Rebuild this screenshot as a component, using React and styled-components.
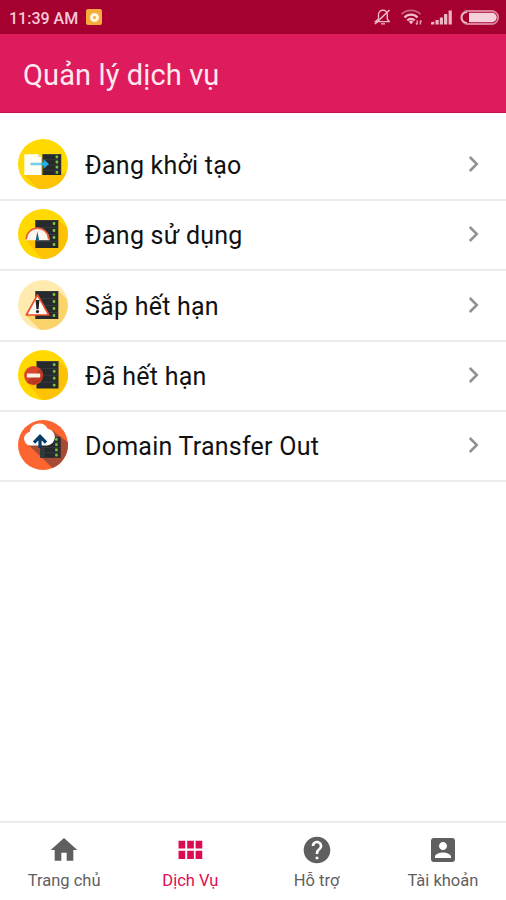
import styled, { createGlobalStyle } from 'styled-components'

const GlobalStyle = createGlobalStyle`
  * {
    box-sizing: border-box;
  }

  body {
    margin: 0;
    background-color: #fff;
    font-family: Roboto, sans-serif;
  }
`

const Server = ({ x = 17.3, y = 11, width = 23, height = 28 }) => {
  const step = height / 4;

  return (
    <g>
      <rect x={x} y={y} width={width} height={height} fill="#272a2c" />
      {[0, 1, 2, 3].map(it => (
        <g key={it}>
          <rect x={x} y={y + step * it} width={width} height="0.7" fill="#3b4144" />
          <rect x={x + width - 5.6} y={y + step * it + step / 2 - 1.4} width="2.6" height="2.8" rx="0.8" fill="#79c23c" />
        </g>
      ))}
    </g>
  )
}

const CreatingIcon = () => (
  <ServiceSvg viewBox="0 0 50 50">
    <circle cx="25" cy="25" r="25" fill="#ffd900" />
    <path d="M6.3 36 43.3 36 48.8 32.5A25 25 0 0 1 19.5 49.4Z" fill="#fdc204" />
    <path d="M6.3 15.2H20l3 2.8V36H6.3Z" fill="#fffdf4" />
    <path d="M20 15.2V18h3Z" fill="#dcdcc8" />
    <Server x={24.4} y={15.2} width={18.8} height={20.8} />
    <path d="M12.5 25H25" stroke="#73d0e8" strokeWidth="2.6" />
    <path d="M23.5 23.4h2v-3.2L31 25l-5.5 4.8v-3.2h-2Z" fill="#25afe0" />
  </ServiceSvg>
)

const UsingIcon = () => (
  <ServiceSvg viewBox="0 0 50 50">
    <circle cx="25" cy="25" r="25" fill="#ffd900" />
    <path d="M7.5 31 40.3 11 49 18.4A25 25 0 0 1 24 50Z" fill="#fdc204" />
    <Server />
    <path d="M7.5 31.2a12 12 0 0 1 24 0Z" fill="#fff8ee" />
    <path d="M8.2 30.5a11.3 11.3 0 0 1 22.6 0" fill="none" stroke="#e9603c" strokeWidth="1.7" />
    <path d="M11.5 30a8 8 0 0 1 16 0" fill="none" stroke="#dce5e8" strokeWidth="1" strokeDasharray="1.4 1.2" />
    <path d="m19.4 22.5 1.4 7a1.5 1.5 0 1 1-2.8 0Z" fill="#176285" />
  </ServiceSvg>
)

const ExpiringIcon = () => (
  <ServiceSvg viewBox="0 0 50 50">
    <circle cx="25" cy="25" r="25" fill="#ffebb0" />
    <path d="M7.8 35.5 40.3 11 49 19A25 25 0 0 1 22 49.8Z" fill="#fbd36b" />
    <Server />
    <path d="M19.5 14.8 30.8 35H8.3Z" fill="#fffaf3" stroke="#e94e2d" strokeWidth="1.7" strokeLinejoin="round" />
    <path d="M17.6 20h3.8l-.8 9.2h-2.2Z" fill="#222" />
    <circle cx="19.5" cy="31.6" r="1.6" fill="#222" />
  </ServiceSvg>
)

const ExpiredIcon = () => (
  <ServiceSvg viewBox="0 0 50 50">
    <circle cx="25" cy="25" r="25" fill="#ffd900" />
    <path d="M8.7 32.5 40.3 11 49 18.4A25 25 0 0 1 24 50Z" fill="#fdc204" />
    <Server x={18.5} y={11.2} width={22} height={27.3} />
    <circle cx="15.6" cy="25.5" r="9.5" fill="#d9472b" />
    <path d="M8.9 32.2A9.5 9.5 0 0 0 22.3 18.8Z" fill="#bd3924" />
    <rect x="8.9" y="23.6" width="13.3" height="3.8" rx="0.7" fill="#fff0e6" />
  </ServiceSvg>
)

const TransferIcon = () => (
  <ServiceSvg viewBox="0 0 50 50">
    <circle cx="25" cy="25" r="25" fill="#fc6530" />
    <path d="M9 23.5 35 10.5 42.5 17l7.2 5A25 25 0 0 1 34.5 48.1Z" fill="#a64b35" />
    <Server x={22.3} y={16.8} width={20.4} height={21} />
    <path d="M12.3 25.4a6.7 6.7 0 0 1-.6-13.3A9.6 9.6 0 0 1 29.7 8.7 8.4 8.4 0 0 1 29 25.4Z" fill="#fff" />
    <path d="M22.2 37.8h4.6V28.5h-4.6Z" fill="#303a3d" />
    <path d="M22 28V16.5M16 22.6l6-6.2 6 6.2" fill="none" stroke="#073b63" strokeWidth="3.2" />
  </ServiceSvg>
)

const services = [
  { label: 'Đang khởi tạo', icon: CreatingIcon },
  { label: 'Đang sử dụng', icon: UsingIcon },
  { label: 'Sắp hết hạn', icon: ExpiringIcon },
  { label: 'Đã hết hạn', icon: ExpiredIcon },
  { label: 'Domain Transfer Out', icon: TransferIcon },
]

const tabs = [
  { label: 'Trang chủ', path: 'M10 20v-6h4v6h5v-8h3L12 3 2 12h3v8z' },
  { label: 'Dịch Vụ', path: 'M3.4 10.8h5V5h-5v5.8zm0 7.9h5v-6.2h-5v6.2zm6.5 0h5v-6.2h-5v6.2zm6.3 0h5v-6.2h-5v6.2zM9.9 10.8h5V5h-5v5.8zM16.2 5v5.8h5V5h-5z', active: true },
  { label: 'Hỗ trợ', path: 'M12 2C6.48 2 2 6.48 2 12s4.48 10 10 10 10-4.48 10-10S17.52 2 12 2zm1 17h-2v-2h2v2zm2.07-7.75-.9.92C13.45 12.9 13 13.5 13 15h-2v-.5c0-1.1.45-2.1 1.17-2.83l1.24-1.26c.37-.36.59-.86.59-1.41 0-1.1-.9-2-2-2s-2 .9-2 2H8c0-2.21 1.79-4 4-4s4 1.79 4 4c0 .88-.36 1.68-.93 2.25z' },
  { label: 'Tài khoản', path: 'M3 5v14c0 1.1.89 2 2 2h14c1.1 0 2-.9 2-2V5c0-1.1-.9-2-2-2H5c-1.11 0-2 .9-2 2zm12 4c0 1.66-1.34 3-3 3s-3-1.34-3-3 1.34-3 3-3 3 1.34 3 3zm-9 8c0-2 4-3.1 6-3.1s6 1.1 6 3.1v1H6v-1z' },
]

const StatusIcons = () => (
  <StatusSvg viewBox="0 0 126 20">
    {/* muted bell */}
    <g fill="none" stroke="#f0bccb" strokeWidth="1.4">
      <path d="M1.5 14.6h13.6L13.3 12V7.6a4.4 4.4 0 0 0-8.8 0V12ZM7 16.9h4" />
      <path d="m1 17 14.5-14" strokeWidth="1.6" />
    </g>
    {/* wifi */}
    <g fill="none" stroke="#f0bccb">
      <path d="M27.5 7.2a13.5 13.5 0 0 1 19 0" stroke="#c7607c" strokeWidth="1.8" />
      <path d="M30.5 10.5a9 9 0 0 1 13 0" strokeWidth="2.3" />
      <path d="M33.3 13.4a5.2 5.2 0 0 1 7.4 0" strokeWidth="2.2" />
    </g>
    <path d="m34.8 14.7 2.3 2.5 2.3-2.5a3.3 3.3 0 0 0-4.6 0Z" fill="#f0bccb" />
    <path d="M43.2 13.5v4m-1.3-1.3 1.3 1.4M46.4 17.5v-4m1.3 1.3-1.3-1.4" stroke="#e49bb0" strokeWidth="1.5" />
    {/* signal */}
    <path d="M57 17.5v-2.2l3.3-.9v3.1ZM61.5 17.5v-4.4h3.2v4.4ZM65.8 17.5v-7h3.2v7ZM70 17.5V7h3.3v10.5ZM74.6 17.5v-14h3.2v14Z" fill="#edb5c4" />
    {/* battery */}
    <rect x="87.2" y="4" width="37" height="13" rx="6.5" fill="none" stroke="#dc8199" strokeWidth="1.8" />
    <path d="M95 5.8h23a4.7 4.7 0 0 1 0 9.4H95Z" fill="#f6d0db" />
    <path d="M93 5.3a5.2 5.2 0 0 0 0 10.4" fill="none" stroke="#f4c8d4" strokeWidth="1.3" />
  </StatusSvg>
)

function App() {
  return (
    <Container>
      <GlobalStyle />
      <StatusBar>
        <ClockGroup>
          <Clock>11:39 AM</Clock>
          <AppBadge />
        </ClockGroup>
        <StatusIcons />
      </StatusBar>

      <Header>
        <Title>Quản lý dịch vụ</Title>
      </Header>

      <ServiceList>
        {services.map(({ label, icon: Icon }) => (
          <ServiceRow key={label}>
            <Icon />
            <ServiceName>{label}</ServiceName>
            <Chevron viewBox="0 0 12 18">
              <path d="m1.8 2 7 7-7 7" />
            </Chevron>
          </ServiceRow>
        ))}
      </ServiceList>

      <TabBar>
        {tabs.map(it => (
          <Tab key={it.label} $active={it.active}>
            <TabIcon viewBox="0 0 24 24">
              <path d={it.path} />
            </TabIcon>
            <TabLabel>{it.label}</TabLabel>
          </Tab>
        ))}
      </TabBar>
    </Container>
  )
}

export default App;

const Container = styled.div`
  display: flex;
  flex-direction: column;
  width: 506px;
  height: 900px;
  background-color: #fff;
  overflow: hidden;
`

const StatusBar = styled.div`
  display: flex;
  flex: none;
  justify-content: space-between;
  align-items: center;
  height: 34px;
  padding: 0 6px 0 9px;
  background-color: #a5002f;
`

const ClockGroup = styled.div`
  display: flex;
  align-items: center;
`

const Clock = styled.span`
  width: 77px;
  padding-top: 3px;
  font-size: 16px;
  font-weight: 500;
  line-height: 20px;
  white-space: nowrap;
  color: #f6cbd7;
`

const AppBadge = styled.div`
  display: flex;
  align-items: center;
  justify-content: center;
  width: 16px;
  height: 16px;
  border-radius: 2px;
  background-color: #f6ab3d;

  &::after {
    content: '';
    box-sizing: border-box;
    width: 9px;
    height: 9px;
    border: 3px solid #fff4dc;
    border-radius: 50%;
  }
`

const StatusSvg = styled.svg`
  width: 126px;
  height: 20px;
`

const Header = styled.header`
  display: flex;
  flex: none;
  align-items: center;
  height: 79px;
  padding: 0 23px 0 23px;
  background-color: #de1b5c;
  border-bottom: 1px solid #c80f4b;
`

const Title = styled.h1`
  margin: 4px 0 0;
  font-size: 29px;
  font-weight: 400;
  line-height: 40px;
  letter-spacing: 0.12px;
  color: #ffe9f0;
`

const ServiceList = styled.div`
  display: flex;
  flex-direction: column;
  flex: 1;
  padding-top: 17.4px;
`

const ServiceRow = styled.div`
  display: flex;
  align-items: center;
  height: 70.4px;
  padding: 0 26px 1.6px 17.6px;
  border-bottom: 2px solid #ebebeb;
`

const ServiceSvg = styled.svg`
  flex: none;
  width: 50px;
  height: 50px;
`

const ServiceName = styled.span`
  flex: 1;
  margin-left: 17.4px;
  padding-top: 4px;
  font-size: 25px;
  line-height: 32px;
  letter-spacing: 0.24px;
  color: #111;
`

const Chevron = styled.svg`
  width: 12px;
  height: 18px;
  fill: none;
  stroke: #919191;
  stroke-width: 2.5;
`

const TabBar = styled.nav`
  display: grid;
  flex: none;
  grid-template-columns: repeat(4, 1fr);
  height: 79px;
  padding-left: 1px;
  border-top: 2px solid #ebebeb;
`

const Tab = styled.div`
  display: flex;
  flex-direction: column;
  align-items: center;
  padding-top: 11px;
  color: ${({ $active }) => $active ? '#dc0c50' : '#5f5f5f'};
`

const TabIcon = styled.svg`
  width: 32px;
  height: 32px;
  fill: currentColor;
`

const TabLabel = styled.span`
  margin-top: 5px;
  font-size: 16.5px;
  line-height: 20px;
`
